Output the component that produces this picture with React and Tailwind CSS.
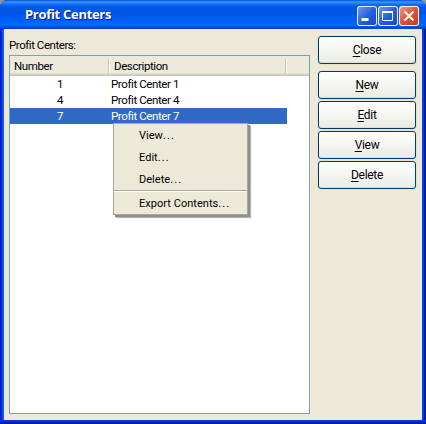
import React from "react";

const rows = [
  ["1", "Profit Center 1"],
  ["4", "Profit Center 4"],
  ["7", "Profit Center 7"],
];

function ActionButton({ label, className = "" }) {
  return (
    <button
      className={`block h-7 w-[98px] rounded-[3px] border border-[#003c74] bg-linear-to-b from-white via-[#f5f5f1] to-[#ebebe4] text-center text-[12px] leading-[27px] tracking-[-0.3px] shadow-[0_0_0_1px_#e4e1d1,inset_0_-1px_0_#dedbd0] ${className}`}
    >
      <span className="underline underline-offset-2">{label[0]}</span>
      {label.slice(1)}
    </button>
  );
}

function CaptionButton({ close = false, children }) {
  return (
    <span
      className={`flex size-5 items-center justify-center rounded-[3px] border border-white/90 ${
        close
          ? "bg-linear-to-br from-[#ee987f] via-[#df5330] to-[#c53a16]"
          : "bg-linear-to-br from-[#7297f0] via-[#295ee0] to-[#1648cc]"
      }`}
    >
      <svg width="18" height="18" viewBox="0 0 18 18" fill="none" stroke="white">
        {children}
      </svg>
    </span>
  );
}

function MenuItem({ children }) {
  return (
    <div className="h-[22px] pl-[25px] text-[11px] leading-[23px] tracking-[0.03px] whitespace-nowrap">
      {children}
      <span className="tracking-[1.1px]">...</span>
    </div>
  );
}

export default function App() {
  return (
    <div className="h-[424px] w-[426px] overflow-hidden bg-[#9c998c] font-['Roboto',sans-serif] text-black">
      <div className="flex h-full flex-col overflow-hidden rounded-t-[7px] bg-[#0831d9]">
        <header className="flex h-[29px] shrink-0 items-center bg-[linear-gradient(to_bottom,#0653d8_0,#3c94ff_2px,#1673f5_4px,#0058e8_7px,#0054e3_14px,#0060fa_20px,#0068ff_25px,#0052dc_27px,#003fc6_29px)] pr-[7px] pl-[25px]">
          <h1 className="mr-auto font-['Open_Sans',sans-serif] text-[13px] font-bold tracking-[-0.3px] text-white [text-shadow:1px_1px_#0a1883]">
            Profit Centers
          </h1>
          <div className="flex gap-px pt-[3px]">
            <CaptionButton>
              <path d="M3.5 12.5h7" strokeWidth="3" />
            </CaptionButton>
            <CaptionButton>
              <path d="M3.5 4.5h10v9h-10z" />
              <path d="M3 5h11" strokeWidth="2" />
            </CaptionButton>
            <CaptionButton close>
              <path d="M4.5 4.5l9 9M13.5 4.5l-9 9" strokeWidth="2" />
            </CaptionButton>
          </div>
        </header>
        <div className="flex flex-1 bg-[linear-gradient(to_right,#0019cf_0,#0831d9_2px,#166aee_3px,#0855dd_4px,#0855dd_422px,#0040e8_422px,#0040e8_424px,#001ea0_424px,#00138c_426px)] px-1">
          <main className="flex h-[391px] w-[418px] bg-[#ece9d8] pl-[5px]">
            <section className="w-[301px]">
              <div className="h-[26px] pt-[9px] text-[11.5px] leading-[14px] tracking-[-0.45px]">
                Profit Centers:
              </div>
              <div className="relative h-[359px] w-[301px] border border-[#7f9db9] bg-white text-[11.5px] tracking-[-0.4px]">
                <div className="flex h-5 items-center bg-[#ebeadb] shadow-[inset_0_-1px_#cbc7b8,inset_0_-2px_#d6d2c2,inset_0_-3px_#e2decd]">
                  <div className="flex h-[14px] w-[99px] items-center border-r border-[#c7c5b2] pt-px pl-1">
                    Number
                  </div>
                  <div className="flex h-[14px] w-[177px] items-center border-r border-l border-r-[#c7c5b2] border-l-white pt-px pl-1">
                    Description
                  </div>
                  <div className="h-[14px] w-px bg-white" />
                </div>
                {rows.map(([num, name], i) => (
                  <div
                    key={num}
                    className={`flex h-4 w-[277px] items-center pt-[2px] ${i === 2 ? "bg-[#316ac5] text-white" : ""}`}
                  >
                    <span className="w-[101px] pl-[47px]">{num}</span>
                    <span>{name}</span>
                  </div>
                ))}
                <div className="absolute top-[67px] left-[103px] h-[92px] w-[135px] border border-[#aca899] bg-[#ece9d8] shadow-[2px_2px_0_#8e8e8e,3px_3px_1px_#b5b5b5]">
                  <MenuItem>View</MenuItem>
                  <MenuItem>Edit</MenuItem>
                  <MenuItem>Delete</MenuItem>
                  <div className="h-[2px] border-t border-b border-t-[#aca899] border-b-white" />
                  <MenuItem>Export Contents</MenuItem>
                </div>
              </div>
            </section>
            <aside className="flex flex-col gap-[2px] pt-[7px] pl-2">
              <ActionButton label="Close" className="mb-[5px]" />
              <ActionButton label="New" />
              <ActionButton label="Edit" />
              <ActionButton label="View" />
              <ActionButton label="Delete" />
            </aside>
          </main>
        </div>
        <div className="h-1 shrink-0 bg-linear-to-b from-[#0040e8] to-[#00138c]" />
      </div>
    </div>
  );
}
